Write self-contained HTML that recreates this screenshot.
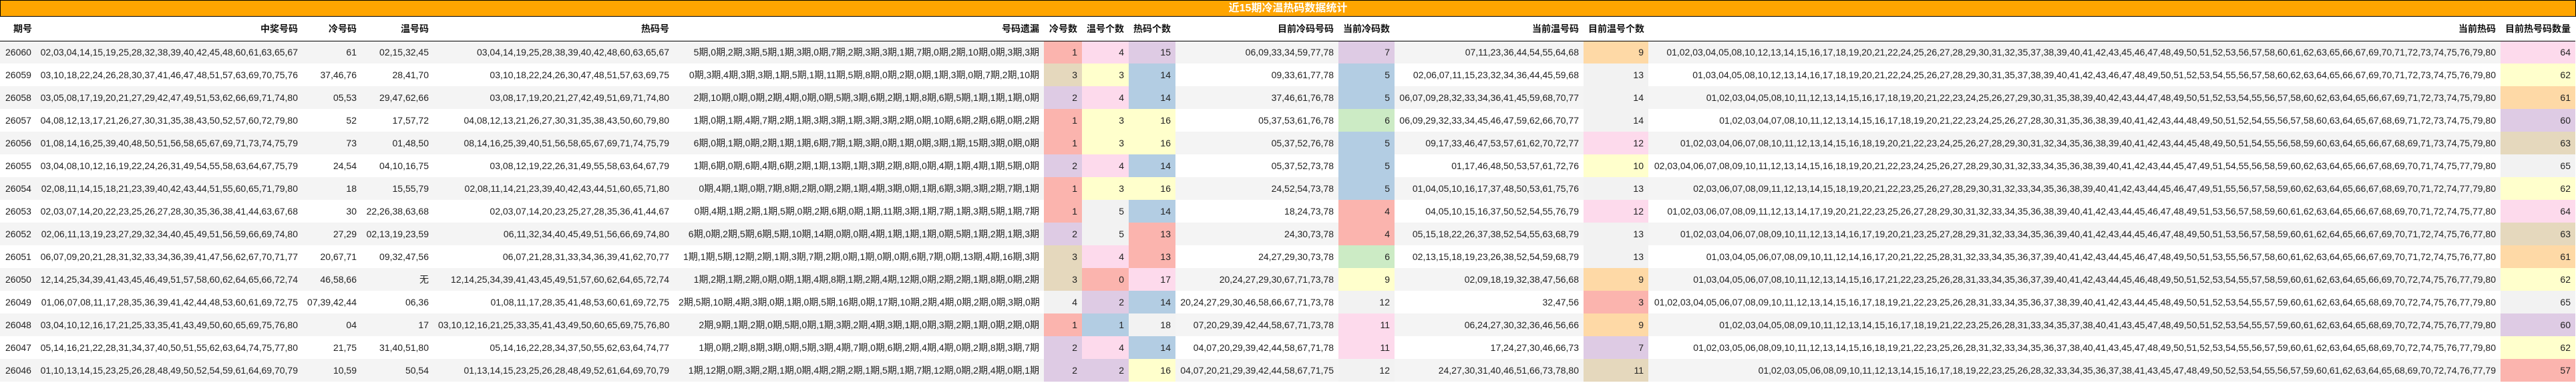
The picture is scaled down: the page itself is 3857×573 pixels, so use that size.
<!DOCTYPE html>
<html><head><meta charset="utf-8"><style>
*{margin:0;padding:0;box-sizing:border-box}
html,body{width:3857px;height:573px;overflow:hidden;background:#fff}
body{font-family:"Liberation Sans","Noto Sans CJK SC",sans-serif;font-size:14px;color:#222;position:relative}
.title{position:absolute;left:0;top:0;width:3857px;height:25px;background:#ffa500;border:1px solid #000;color:#fff;font-weight:bold;font-size:16px;text-align:center;line-height:23px}
table{position:absolute;left:0;top:25px;border-collapse:collapse;table-layout:fixed;width:3856px}
td,th{white-space:nowrap;padding:0 7px;text-align:right;overflow:visible;height:34px}
th{height:36px;font-weight:bold;border-bottom:1px solid #000;color:#111}
td:first-child{text-align:left;padding-left:8px}
th:first-child{text-align:left;padding-left:20px}
tbody tr:nth-child(odd){background:#f4f4f4}
tbody tr:nth-child(even){background:#fff}
.S{background:#fbb4ae}.B{background:#b3cde3}.G{background:#ccebc5}.L{background:#decbe4}.O{background:#fed9a6}.Y{background:#ffffcc}.T{background:#e5d8bd}.P{background:#fddaec}.R{background:#f2f2f2}
</style></head><body>
<div class="title">近15期冷温热码数据统计</div>
<table>
<colgroup><col style="width:53px"><col style="width:400px"><col style="width:88px"><col style="width:108px"><col style="width:360px"><col style="width:554px"><col style="width:57px"><col style="width:70px"><col style="width:70px"><col style="width:244px"><col style="width:84px"><col style="width:283px"><col style="width:97px"><col style="width:1276px"><col style="width:112px"></colgroup>
<thead><tr><th>期号</th><th>中奖号码</th><th>冷号码</th><th>温号码</th><th>热码号</th><th>号码遗漏</th><th>冷号数</th><th>温号个数</th><th>热码个数</th><th>目前冷码号码</th><th>当前冷码数</th><th>当前温号码</th><th>目前温号个数</th><th>当前热码</th><th>目前热号码数量</th></tr></thead>
<tbody>
<tr><td>26060</td><td>02,03,04,14,15,19,25,28,32,38,39,40,42,45,48,60,61,63,65,67</td><td>61</td><td>02,15,32,45</td><td>03,04,14,19,25,28,38,39,40,42,48,60,63,65,67</td><td>5期,0期,2期,3期,5期,1期,3期,0期,7期,2期,3期,3期,1期,7期,0期,2期,10期,0期,3期,3期</td><td class="S">1</td><td class="P">4</td><td class="L">15</td><td>06,09,33,34,59,77,78</td><td class="L">7</td><td>07,11,23,36,44,54,55,64,68</td><td class="O">9</td><td>01,02,03,04,05,08,10,12,13,14,15,16,17,18,19,20,21,22,24,25,26,27,28,29,30,31,32,35,37,38,39,40,41,42,43,45,46,47,48,49,50,51,52,53,56,57,58,60,61,62,63,65,66,67,69,70,71,72,73,74,75,76,79,80</td><td class="P">64</td></tr>
<tr><td>26059</td><td>03,10,18,22,24,26,28,30,37,41,46,47,48,51,57,63,69,70,75,76</td><td>37,46,76</td><td>28,41,70</td><td>03,10,18,22,24,26,30,47,48,51,57,63,69,75</td><td>0期,3期,4期,3期,3期,1期,5期,1期,11期,5期,8期,0期,2期,0期,1期,3期,0期,7期,2期,10期</td><td class="T">3</td><td class="Y">3</td><td class="B">14</td><td>09,33,61,77,78</td><td class="B">5</td><td>02,06,07,11,15,23,32,34,36,44,45,59,68</td><td class="R">13</td><td>01,03,04,05,08,10,12,13,14,16,17,18,19,20,21,22,24,25,26,27,28,29,30,31,35,37,38,39,40,41,42,43,46,47,48,49,50,51,52,53,54,55,56,57,58,60,62,63,64,65,66,67,69,70,71,72,73,74,75,76,79,80</td><td class="Y">62</td></tr>
<tr><td>26058</td><td>03,05,08,17,19,20,21,27,29,42,47,49,51,53,62,66,69,71,74,80</td><td>05,53</td><td>29,47,62,66</td><td>03,08,17,19,20,21,27,42,49,51,69,71,74,80</td><td>2期,10期,0期,0期,2期,4期,0期,0期,5期,3期,6期,2期,1期,8期,6期,5期,1期,1期,1期,0期</td><td class="L">2</td><td class="P">4</td><td class="B">14</td><td>37,46,61,76,78</td><td class="B">5</td><td>06,07,09,28,32,33,34,36,41,45,59,68,70,77</td><td class="R">14</td><td>01,02,03,04,05,08,10,11,12,13,14,15,16,17,18,19,20,21,22,23,24,25,26,27,29,30,31,35,38,39,40,42,43,44,47,48,49,50,51,52,53,54,55,56,57,58,60,62,63,64,65,66,67,69,71,72,73,74,75,79,80</td><td class="O">61</td></tr>
<tr><td>26057</td><td>04,08,12,13,17,21,26,27,30,31,35,38,43,50,52,57,60,72,79,80</td><td>52</td><td>17,57,72</td><td>04,08,12,13,21,26,27,30,31,35,38,43,50,60,79,80</td><td>1期,0期,1期,4期,7期,2期,1期,3期,3期,1期,3期,3期,2期,0期,10期,6期,2期,6期,0期,2期</td><td class="S">1</td><td class="Y">3</td><td class="Y">16</td><td>05,37,53,61,76,78</td><td class="G">6</td><td>06,09,29,32,33,34,45,46,47,59,62,66,70,77</td><td class="R">14</td><td>01,02,03,04,07,08,10,11,12,13,14,15,16,17,18,19,20,21,22,23,24,25,26,27,28,30,31,35,36,38,39,40,41,42,43,44,48,49,50,51,52,54,55,56,57,58,60,63,64,65,67,68,69,71,72,73,74,75,79,80</td><td class="L">60</td></tr>
<tr><td>26056</td><td>01,08,14,16,25,39,40,48,50,51,56,58,65,67,69,71,73,74,75,79</td><td>73</td><td>01,48,50</td><td>08,14,16,25,39,40,51,56,58,65,67,69,71,74,75,79</td><td>6期,0期,1期,0期,2期,1期,1期,6期,7期,1期,3期,0期,1期,0期,3期,1期,15期,3期,0期,0期</td><td class="S">1</td><td class="Y">3</td><td class="Y">16</td><td>05,37,52,76,78</td><td class="B">5</td><td>09,17,33,46,47,53,57,61,62,70,72,77</td><td class="P">12</td><td>01,02,03,04,06,07,08,10,11,12,13,14,15,16,18,19,20,21,22,23,24,25,26,27,28,29,30,31,32,34,35,36,38,39,40,41,42,43,44,45,48,49,50,51,54,55,56,58,59,60,63,64,65,66,67,68,69,71,73,74,75,79,80</td><td class="T">63</td></tr>
<tr><td>26055</td><td>03,04,08,10,12,16,19,22,24,26,31,49,54,55,58,63,64,67,75,79</td><td>24,54</td><td>04,10,16,75</td><td>03,08,12,19,22,26,31,49,55,58,63,64,67,79</td><td>1期,6期,0期,6期,4期,6期,2期,1期,13期,1期,3期,2期,8期,0期,4期,1期,4期,1期,5期,0期</td><td class="L">2</td><td class="P">4</td><td class="B">14</td><td>05,37,52,73,78</td><td class="B">5</td><td>01,17,46,48,50,53,57,61,72,76</td><td class="Y">10</td><td>02,03,04,06,07,08,09,10,11,12,13,14,15,16,18,19,20,21,22,23,24,25,26,27,28,29,30,31,32,33,34,35,36,38,39,40,41,42,43,44,45,47,49,51,54,55,56,58,59,60,62,63,64,65,66,67,68,69,70,71,74,75,77,79,80</td><td class="R">65</td></tr>
<tr><td>26054</td><td>02,08,11,14,15,18,21,23,39,40,42,43,44,51,55,60,65,71,79,80</td><td>18</td><td>15,55,79</td><td>02,08,11,14,21,23,39,40,42,43,44,51,60,65,71,80</td><td>0期,4期,1期,0期,7期,8期,2期,0期,2期,1期,4期,3期,0期,1期,6期,3期,3期,2期,7期,1期</td><td class="S">1</td><td class="Y">3</td><td class="Y">16</td><td>24,52,54,73,78</td><td class="B">5</td><td>01,04,05,10,16,17,37,48,50,53,61,75,76</td><td class="R">13</td><td>02,03,06,07,08,09,11,12,13,14,15,18,19,20,21,22,23,25,26,27,28,29,30,31,32,33,34,35,36,38,39,40,41,42,43,44,45,46,47,49,51,55,56,57,58,59,60,62,63,64,65,66,67,68,69,70,71,72,74,77,79,80</td><td class="Y">62</td></tr>
<tr><td>26053</td><td>02,03,07,14,20,22,23,25,26,27,28,30,35,36,38,41,44,63,67,68</td><td>30</td><td>22,26,38,63,68</td><td>02,03,07,14,20,23,25,27,28,35,36,41,44,67</td><td>0期,4期,1期,2期,1期,5期,0期,2期,6期,0期,1期,11期,3期,1期,7期,1期,3期,5期,1期,7期</td><td class="S">1</td><td class="R">5</td><td class="B">14</td><td>18,24,73,78</td><td class="S">4</td><td>04,05,10,15,16,37,50,52,54,55,76,79</td><td class="P">12</td><td>01,02,03,06,07,08,09,11,12,13,14,17,19,20,21,22,23,25,26,27,28,29,30,31,32,33,34,35,36,38,39,40,41,42,43,44,45,46,47,48,49,51,53,56,57,58,59,60,61,62,63,64,65,66,67,68,69,70,71,72,74,75,77,80</td><td class="P">64</td></tr>
<tr><td>26052</td><td>02,06,11,13,19,23,27,29,32,34,40,45,49,51,56,59,66,69,74,80</td><td>27,29</td><td>02,13,19,23,59</td><td>06,11,32,34,40,45,49,51,56,66,69,74,80</td><td>6期,0期,2期,5期,6期,5期,10期,14期,0期,0期,4期,1期,1期,1期,0期,5期,1期,2期,1期,3期</td><td class="L">2</td><td class="R">5</td><td class="S">13</td><td>24,30,73,78</td><td class="S">4</td><td>05,15,18,22,26,37,38,52,54,55,63,68,79</td><td class="R">13</td><td>01,02,03,04,06,07,08,09,10,11,12,13,14,16,17,19,20,21,23,25,27,28,29,31,32,33,34,35,36,39,40,41,42,43,44,45,46,47,48,49,50,51,53,56,57,58,59,60,61,62,64,65,66,67,69,70,71,72,74,75,76,77,80</td><td class="T">63</td></tr>
<tr><td>26051</td><td>06,07,09,20,21,28,31,32,33,34,36,39,41,47,56,62,67,70,71,77</td><td>20,67,71</td><td>09,32,47,56</td><td>06,07,21,28,31,33,34,36,39,41,62,70,77</td><td>1期,1期,5期,12期,2期,1期,3期,7期,2期,0期,1期,0期,0期,6期,7期,0期,13期,4期,16期,3期</td><td class="T">3</td><td class="P">4</td><td class="S">13</td><td>24,27,29,30,73,78</td><td class="G">6</td><td>02,13,15,18,19,23,26,38,52,54,59,68,79</td><td class="R">13</td><td>01,03,04,05,06,07,08,09,10,11,12,14,16,17,20,21,22,25,28,31,32,33,34,35,36,37,39,40,41,42,43,44,45,46,47,48,49,50,51,53,55,56,57,58,60,61,62,63,64,65,66,67,69,70,71,72,74,75,76,77,80</td><td class="O">61</td></tr>
<tr><td>26050</td><td>12,14,25,34,39,41,43,45,46,49,51,57,58,60,62,64,65,66,72,74</td><td>46,58,66</td><td>无</td><td>12,14,25,34,39,41,43,45,49,51,57,60,62,64,65,72,74</td><td>1期,2期,1期,2期,0期,0期,1期,4期,8期,1期,2期,4期,12期,0期,2期,2期,1期,8期,0期,2期</td><td class="T">3</td><td class="S">0</td><td class="P">17</td><td>20,24,27,29,30,67,71,73,78</td><td class="Y">9</td><td>02,09,18,19,32,38,47,56,68</td><td class="O">9</td><td>01,03,04,05,06,07,08,10,11,12,13,14,15,16,17,21,22,23,25,26,28,31,33,34,35,36,37,39,40,41,42,43,44,45,46,48,49,50,51,52,53,54,55,57,58,59,60,61,62,63,64,65,66,69,70,72,74,75,76,77,79,80</td><td class="Y">62</td></tr>
<tr><td>26049</td><td>01,06,07,08,11,17,28,35,36,39,41,42,44,48,53,60,61,69,72,75</td><td>07,39,42,44</td><td>06,36</td><td>01,08,11,17,28,35,41,48,53,60,61,69,72,75</td><td>2期,5期,10期,4期,3期,0期,1期,0期,5期,16期,0期,17期,10期,2期,4期,0期,2期,0期,3期,0期</td><td class="R">4</td><td class="L">2</td><td class="B">14</td><td>20,24,27,29,30,46,58,66,67,71,73,78</td><td class="R">12</td><td>32,47,56</td><td class="S">3</td><td>01,02,03,04,05,06,07,08,09,10,11,12,13,14,15,16,17,18,19,21,22,23,25,26,28,31,33,34,35,36,37,38,39,40,41,42,43,44,45,48,49,50,51,52,53,54,55,57,59,60,61,62,63,64,65,68,69,70,72,74,75,76,77,79,80</td><td class="R">65</td></tr>
<tr><td>26048</td><td>03,04,10,12,16,17,21,25,33,35,41,43,49,50,60,65,69,75,76,80</td><td>04</td><td>17</td><td>03,10,12,16,21,25,33,35,41,43,49,50,60,65,69,75,76,80</td><td>2期,9期,1期,2期,0期,5期,0期,1期,3期,2期,4期,3期,1期,0期,3期,2期,1期,0期,2期,0期</td><td class="S">1</td><td class="B">1</td><td class="R">18</td><td>07,20,29,39,42,44,58,67,71,73,78</td><td class="P">11</td><td>06,24,27,30,32,36,46,56,66</td><td class="O">9</td><td>01,02,03,04,05,08,09,10,11,12,13,14,15,16,17,18,19,21,22,23,25,26,28,31,33,34,35,37,38,40,41,43,45,47,48,49,50,51,52,53,54,55,57,59,60,61,62,63,64,65,68,69,70,72,74,75,76,77,79,80</td><td class="L">60</td></tr>
<tr><td>26047</td><td>05,14,16,21,22,28,31,34,37,40,50,51,55,62,63,64,74,75,77,80</td><td>21,75</td><td>31,40,51,80</td><td>05,14,16,22,28,34,37,50,55,62,63,64,74,77</td><td>1期,0期,2期,8期,3期,0期,5期,3期,4期,7期,0期,6期,2期,4期,4期,0期,2期,8期,3期,7期</td><td class="L">2</td><td class="P">4</td><td class="B">14</td><td>04,07,20,29,39,42,44,58,67,71,78</td><td class="P">11</td><td>17,24,27,30,46,66,73</td><td class="L">7</td><td>01,02,03,05,06,08,09,10,11,12,13,14,15,16,18,19,21,22,23,25,26,28,31,32,33,34,35,36,37,38,40,41,43,45,47,48,49,50,51,52,53,54,55,56,57,59,60,61,62,63,64,65,68,69,70,72,74,75,76,77,79,80</td><td class="Y">62</td></tr>
<tr><td>26046</td><td>01,10,13,14,15,23,25,26,28,48,49,50,52,54,59,61,64,69,70,79</td><td>10,59</td><td>50,54</td><td>01,13,14,15,23,25,26,28,48,49,52,61,64,69,70,79</td><td>1期,12期,0期,3期,2期,1期,0期,4期,2期,2期,1期,5期,1期,7期,12期,0期,2期,4期,0期,1期</td><td class="L">2</td><td class="L">2</td><td class="Y">16</td><td>04,07,20,21,29,39,42,44,58,67,71,75</td><td class="R">12</td><td>24,27,30,31,40,46,51,66,73,78,80</td><td class="T">11</td><td>01,02,03,05,06,08,09,10,11,12,13,14,15,16,17,18,19,22,23,25,26,28,32,33,34,35,36,37,38,41,43,45,47,48,49,50,52,53,54,55,56,57,59,60,61,62,63,64,65,68,69,70,72,74,76,77,79</td><td class="S">57</td></tr>
</tbody></table>
</body></html>
